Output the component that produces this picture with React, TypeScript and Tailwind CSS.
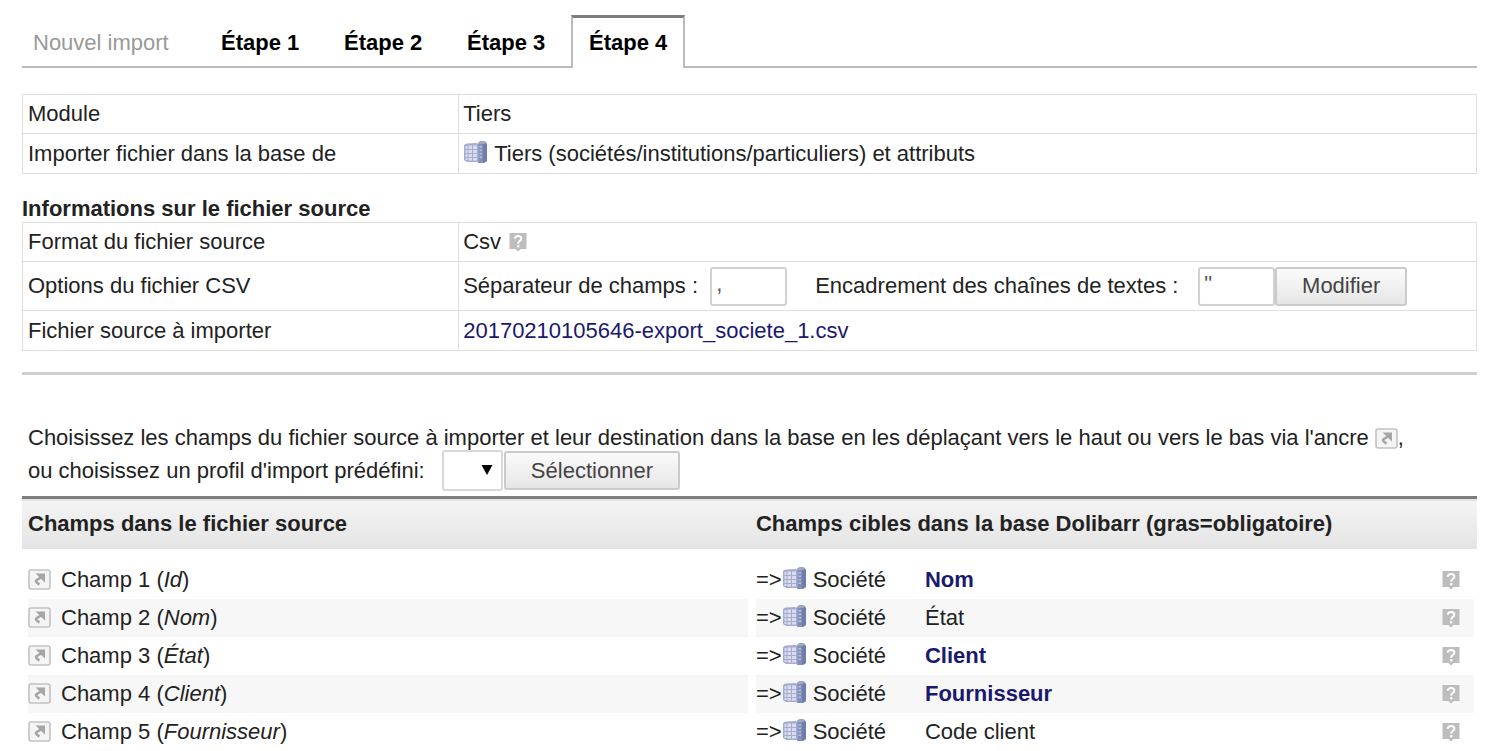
import React from 'react';

const steps = ['Étape 1', 'Étape 2', 'Étape 3'];

const fields = [
  { source: 'Id', target: 'Nom', required: true },
  { source: 'Nom', target: 'État', required: false },
  { source: 'État', target: 'Client', required: true },
  { source: 'Client', target: 'Fournisseur', required: true },
  { source: 'Fournisseur', target: 'Code client', required: false },
];

function CompanyIcon() {
  return (
    <svg viewBox="0 0 25 24" className="inline-block h-6 w-[25px] shrink-0 -translate-y-0.5" aria-hidden="true">
      <path d="M15 4 L16 2 Q19 0 23 2 L24 4 V21 L21 23 H15 Z" fill="#8390b8" />
      <path d="M20 4 L24 4 V21 L20 23 Z" fill="#6f7dab" />
      <path d="M15 2.5 Q19 0 23 2.5 L20 4 H16 Z" fill="#a0a9c8" />
      <path d="M1 6 Q1 4 4 3.500 L13 3 Q15.500 3 15.500 6 V22 L4 22 L1 20 Z" fill="#a6acd0" />
      <path
        d="M2.500 6h2v3h-2zM5.500 5.500h3.500v3.500H5.500zM10 5.500h4v3.500h-4zM2.500 10h2v3h-2zM5.500 10h3.500v3H5.500zM10 10h4v3h-4zM2.500 14h2v3h-2zM5.500 14h3.500v3H5.500zM10 14h4v3h-4zM2.500 18h2v2h-2zM5.500 18h3.500v2.500H5.500zM10 18h4v2.500h-4z"
        fill="#d9dcee"
      />
      <path d="M16.500 6h2.500v1.500h-2.500zM16.500 9.500h2.500V11h-2.500zM16.500 13h2.500v1.500h-2.500zM16.500 16.500h2.500V18h-2.500z" fill="#b6bed8" />
    </svg>
  );
}

function HelpIcon() {
  return (
    <svg viewBox="0 0 18 20" className="inline-block h-5 w-[18px] shrink-0" role="img" aria-label="Aide">
      <path d="M0.500 1H17.500V17H11.500L9 19.500L6.500 17H0.500Z" fill="#bdbdbd" />
      <path d="M5.800 6.800Q6 4 9.200 4Q12.300 4 12.300 6.700Q12.300 8.200 10.500 9.200Q9.200 10 9.200 11.700" fill="none" stroke="#fff" strokeWidth="2" />
      <path d="M8 13.200h2.400v2.200H8z" fill="#fff" />
    </svg>
  );
}

function AnchorIcon() {
  return (
    <svg viewBox="0 0 23 21" className="inline-block h-[21px] w-[23px] shrink-0" aria-hidden="true">
      <rect x="1" y="1" width="21" height="19" rx="2" fill="#f4f4f4" stroke="#c2c2c2" strokeWidth="1.600" />
      <path d="M7.500 4.500H17V13.500L14.200 11L10 6.800Z" fill="#a6a6a6" />
      <path d="M14.500 7.500L8.500 11.200Q6.800 12.800 11.500 15.500" fill="none" stroke="#a6a6a6" strokeWidth="2.600" />
    </svg>
  );
}

const labelCell = 'w-[30%] border border-[#dedede] px-[5px]';
const valueCell = 'border border-[#dedede] px-1';
const field = 'h-[39px] w-[77px] rounded-[3px] border-2 border-[#d2d2d2] bg-white px-1 pb-1 text-[22px] text-[#555]';
const button =
  'h-[39px] rounded-[3px] border-2 border-[#cacaca] bg-linear-to-b from-[#fbfbfb] to-[#e6e6e6] text-[22px] text-[#444]';

export default function App() {
  return (
    <main className="bg-white pr-3 pl-[22px] pt-[15px] font-['Liberation_Sans',Arial,sans-serif] text-[22px] leading-8 text-[#222]">
      <nav className="flex h-[53px] border-b-2 border-[#bbb]">
        <a href="#nouvel" className="w-[175px] pl-[11px] pt-3 text-[#999]">
          Nouvel import
        </a>
        {steps.map((s) => (
          <a key={s} href="#etape" className="w-[123px] pl-6 pt-3 font-bold text-black">
            {s}
          </a>
        ))}
        <a
          href="#etape4"
          aria-current="page"
          className="-mb-0.5 ml-[5px] w-[114px] border-x-2 border-t-[3px] border-x-[#bbb] border-t-[#7d7d7d] bg-white pl-4 pt-[9px] font-bold text-black"
        >
          Étape 4
        </a>
      </nav>

      <table className="mt-[26px] w-full border-collapse">
        <tbody>
          <tr className="h-[39px]">
            <td className={labelCell}>Module</td>
            <td className={valueCell}>Tiers</td>
          </tr>
          <tr className="h-10">
            <td className={labelCell}>Importer fichier dans la base de</td>
            <td className={valueCell}>
              <span className="flex items-center gap-1.5">
                <CompanyIcon />
                Tiers (sociétés/institutions/particuliers) et attributs
              </span>
            </td>
          </tr>
        </tbody>
      </table>

      <h2 className="mt-[22px] text-[22px] leading-[26px] font-bold text-[#222]">Informations sur le fichier source</h2>
      <table className="w-full border-collapse">
        <tbody>
          <tr className="h-[39px]">
            <td className={labelCell}>Format du fichier source</td>
            <td className={valueCell}>
              <span className="flex items-center gap-2">
                Csv
                <HelpIcon />
              </span>
            </td>
          </tr>
          <tr className="h-[49px]">
            <td className={labelCell}>Options du fichier CSV</td>
            <td className={valueCell}>
              <div className="flex items-center">
                <label htmlFor="separator" className="w-[247px]">
                  Séparateur de champs :
                </label>
                <input id="separator" defaultValue="," className={field} />
                <label htmlFor="enclosure" className="ml-7 w-[383px]">
                  Encadrement des chaînes de textes :
                </label>
                <input id="enclosure" defaultValue={'"'} className={field} />
                <button type="button" className={`${button} w-[132px]`}>
                  Modifier
                </button>
              </div>
            </td>
          </tr>
          <tr className="h-10">
            <td className={labelCell}>Fichier source à importer</td>
            <td className={valueCell}>
              <a href="#csv" className="text-[#191970]">
                20170210105646-export_societe_1.csv
              </a>
            </td>
          </tr>
        </tbody>
      </table>

      <hr className="mt-[21px] border-t-[3px] border-[#cfcfcf]" />

      <div className="mt-[47px] pl-1.5">
        <p className="flex items-center whitespace-nowrap">
          Choisissez les champs du fichier source à importer et leur destination dans la base en les déplaçant vers le haut ou vers le bas via l'ancre
          <span className="ml-1.5 flex items-center">
            <AnchorIcon />,
          </span>
        </p>
        <div className="-mt-1 flex items-center">
          <label htmlFor="profile" className="w-[414px]">
            ou choisissez un profil d'import prédéfini:
          </label>
          <span className="relative flex">
            <select id="profile" className="h-[41px] w-[61px] appearance-none rounded-[3px] border-2 border-[#d8d8d8] bg-white" />
            <svg viewBox="0 0 12 11" className="pointer-events-none absolute top-3.5 right-2.5 h-[11px] w-3" aria-hidden="true">
              <path d="M0.500 1H11.500L6 11Z" fill="#000" />
            </svg>
          </span>
          <button type="button" className={`${button} ml-px w-[176px]`}>
            Sélectionner
          </button>
        </div>
      </div>

      <table className="mt-[5px] w-full table-fixed border-collapse">
        <colgroup>
          <col className="w-1.5" />
          <col />
          <col className="w-2" />
          <col className="w-[169px]" />
          <col className="w-[509px]" />
          <col className="w-10" />
          <col className="w-[3px]" />
        </colgroup>
        <thead>
          <tr className="h-[51px] border-t-[3px] border-[#7d7d7d] bg-linear-to-b from-[#f4f4f4] to-[#e4e4e4] text-left">
            <th colSpan={3} className="pl-1.5">
              Champs dans le fichier source
            </th>
            <th colSpan={4}>Champs cibles dans la base Dolibarr (gras=obligatoire)</th>
          </tr>
          <tr className="h-3" />
        </thead>
        <tbody>
          {fields.map((f, i) => {
            const tone = i % 2 ? 'bg-[#f7f7f7]' : 'bg-white';
            return (
              <tr key={f.source} className="h-[38px]">
                <td />
                <td className={tone}>
                  <span className="flex items-center gap-2.5">
                    <AnchorIcon />
                    <span>
                      Champ {i + 1} (<i>{f.source}</i>)
                    </span>
                  </span>
                </td>
                <td />
                <td className={tone}>
                  <span className="flex items-center">
                    =&gt;
                    <CompanyIcon />
                    <span className="ml-1.5">Société</span>
                  </span>
                </td>
                <td className={tone}>
                  {f.required ? <b className="text-[#191970]">{f.target}</b> : f.target}
                </td>
                <td className={`${tone} pl-2`}>
                  <span className="flex items-center">
                    <HelpIcon />
                  </span>
                </td>
                <td />
              </tr>
            );
          })}
        </tbody>
      </table>
    </main>
  );
}
